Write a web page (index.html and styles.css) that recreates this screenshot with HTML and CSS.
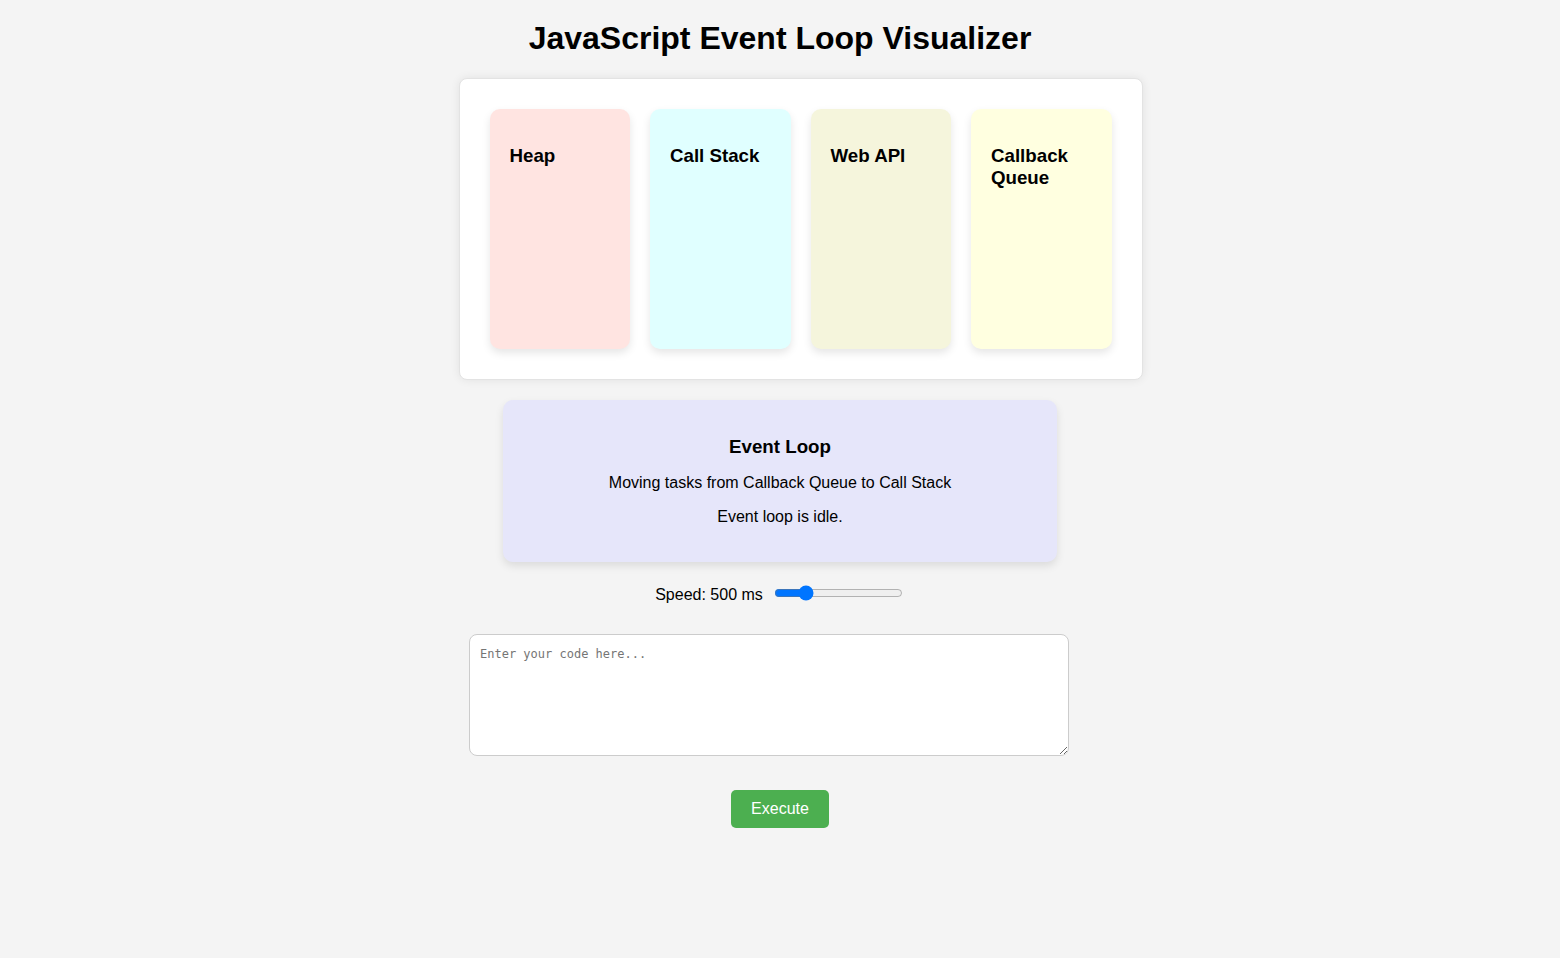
FILE: index.html
```html
<!DOCTYPE html>
<html lang="en">
<head>
<meta charset="UTF-8">
<title>JavaScript Event Loop Visualizer</title>
<link rel="stylesheet" href="styles.css">
</head>
<body>
  <h1 class="title">JavaScript Event Loop Visualizer</h1>
  <div class="visualizer">
    <div class="card heap"><h3>Heap</h3></div>
    <div class="card call-stack"><h3>Call Stack</h3></div>
    <div class="card web-api"><h3>Web API</h3></div>
    <div class="card callback-queue"><h3>Callback Queue</h3></div>
  </div>
  <div class="event-loop">
    <h3>Event Loop</h3>
    <p>Moving tasks from Callback Queue to Call Stack</p>
    <p>Event loop is idle.</p>
  </div>
  <div class="speed-row">
    <label for="speed">Speed: <span>500</span> ms</label>
    <input id="speed" class="speed-slider" type="range" min="100" max="2000" value="500">
  </div>
  <textarea class="code-input" placeholder="Enter your code here..."></textarea>
  <button class="execute-btn">Execute</button>
</body>
</html>
```

FILE: styles.css
```css
body {
  margin: 0;
  background: #f4f4f4;
  font-family: "Liberation Sans", Arial, sans-serif;
  color: #000;
  display: flex;
  flex-direction: column;
  align-items: center;
}

.title {
  font-size: 32px;
  line-height: 37px;
  margin: 20px 0 21px;
}

.visualizer {
  display: flex;
  gap: 20px;
  padding: 30px;
  background: #fff;
  border: 1px solid #e3e3e3;
  border-radius: 8px;
  box-shadow: 0 0 10px rgba(0, 0, 0, 0.08);
  margin-left: 41px;
}

.card {
  width: 140.5px;
  height: 240px;
  box-sizing: border-box;
  padding: 17px 20px 15px;
  border-radius: 10px;
  box-shadow: 0 4px 8px rgba(0, 0, 0, 0.1);
}

.card h3 {
  font-size: 18.72px;
  margin: 18.72px 0;
}

.heap { background: #ffe4e1; }
.call-stack { background: #e0ffff; }
.web-api { background: #f5f5dc; }
.callback-queue { background: #ffffe0; }

.event-loop {
  width: 554px;
  box-sizing: border-box;
  margin-top: 20px;
  padding: 20px;
  background: #e6e6fa;
  border-radius: 10px;
  box-shadow: 0 4px 8px rgba(0, 0, 0, 0.1);
  text-align: center;
}

.event-loop h3 {
  font-size: 18.72px;
  margin: 16px 0;
}

.event-loop p {
  font-size: 16px;
  margin: 16px 0;
}

.speed-row {
  display: flex;
  align-items: center;
  gap: 11px;
  margin-top: 23px;
  margin-right: 2px;
  font-size: 16px;
}

.speed-slider {
  margin: 0 0 4px;
}

.code-input {
  width: 600px;
  height: 122px;
  box-sizing: border-box;
  margin: 29px 22px 0 0;
  padding: 12px 10px 10px;
  border: 1px solid #ccc;
  border-radius: 8px;
  background: #fff;
  font-family: "DejaVu Sans Mono", "Liberation Mono", monospace;
  font-size: 12px;
}

.code-input::placeholder {
  color: #757575;
}

.execute-btn {
  margin-top: 34px;
  padding: 10px 20px;
  background: #4caf50;
  color: #fff;
  border: none;
  border-radius: 5px;
  font-family: "Liberation Sans", Arial, sans-serif;
  font-size: 16px;
  line-height: 18px;
  cursor: pointer;
}
```
